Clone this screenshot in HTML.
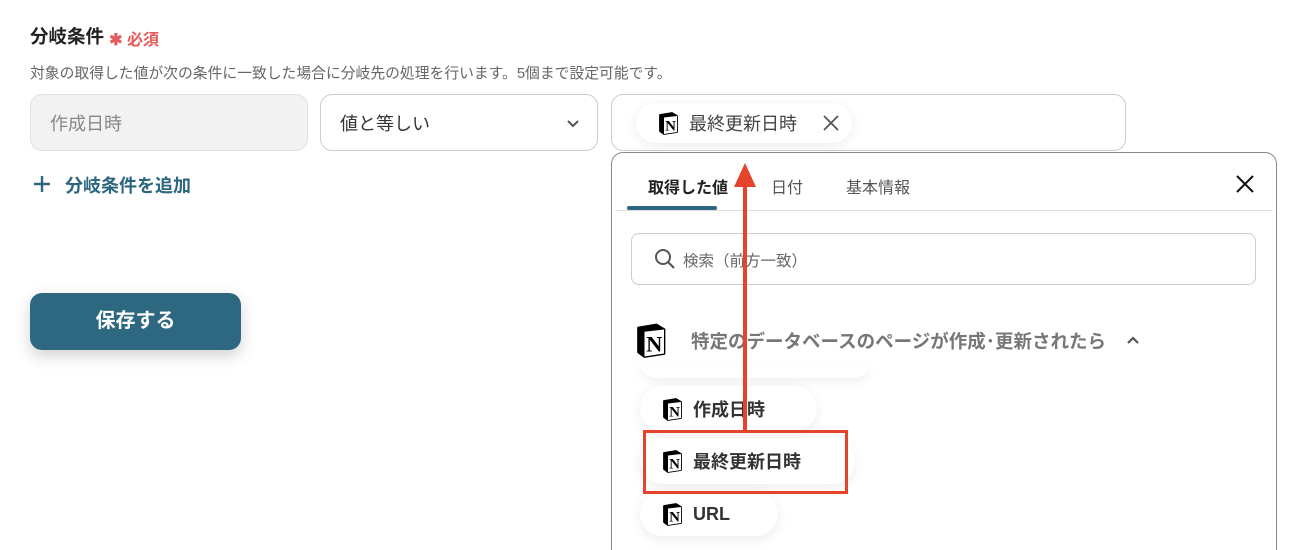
<!DOCTYPE html>
<html><head><meta charset="utf-8"><style>
*{box-sizing:border-box;margin:0;padding:0}
html,body{width:1290px;height:550px;overflow:hidden}
body{background:#fff;position:relative;font-family:"Liberation Sans","Noto Sans CJK JP",sans-serif;color:#333}
.a{position:absolute;white-space:nowrap}
.chip{position:absolute;background:#fff;border-radius:24px;box-shadow:0 3px 12px rgba(0,0,0,.08);display:flex;align-items:center;font-weight:bold;font-size:18px;color:#333}
.chip .ic{margin:0 8px 0 21px}
</style></head><body>
<svg width="0" height="0" style="position:absolute"><defs>
<g id="n"><path d="M3 4 L15 2 L20 5 L20 21 L7 23 L3 20 Z" fill="#000" stroke="#000" stroke-width="1.8" stroke-linejoin="round"/><path d="M7 6.5 L20 5 L20 21 L7 23 Z" fill="#fff"/><text x="13.5" y="19.5" font-family="Liberation Serif" font-weight="bold" font-size="15" text-anchor="middle" fill="#000">N</text></g>
</defs></svg>
<div class="a" style="left:30px;top:23px;font-size:18.5px;font-weight:bold;color:#222">分岐条件 <span style="color:#e55a5a;font-size:16px;position:relative;top:2px">✱ 必須</span></div>
<div class="a" style="left:30px;top:62px;font-size:14.8px;color:#666">対象の取得した値が次の条件に一致した場合に分岐先の処理を行います。5個まで設定可能です。</div>
<div class="a" style="left:30px;top:94px;width:278px;height:57px;background:#f2f2f2;border:1px solid #e0e0e0;border-radius:12px;font-size:18px;color:#888;padding:15px 0 0 19px">作成日時</div>
<div class="a" style="left:320px;top:94px;width:278px;height:57px;background:#fff;border:1px solid #ccc;border-radius:12px;font-size:18px;color:#333;padding:15px 0 0 19px">値と等しい
<svg style="position:absolute;left:245px;top:24px" width="14" height="9"><path d="M2 2 L7 7 L12 2" fill="none" stroke="#555" stroke-width="2"/></svg></div>
<div class="a" style="left:611px;top:94px;width:515px;height:57px;border:1px solid #ccc;border-radius:12px"></div>
<div class="chip" style="left:636px;top:103px;width:216px;height:40px;font-weight:normal;font-size:18px;color:#444"><svg class="ic" width="24" height="24"><use href="#n"/></svg>最終更新日時
<svg style="position:absolute;left:187px;top:12px" width="16" height="16"><path d="M1 1 L15 15 M15 1 L1 15" stroke="#555" stroke-width="1.8"/></svg></div>
<svg class="a" style="left:34px;top:176px" width="16" height="16"><path d="M8 0 V16 M0 8 H16" stroke="#2d6680" stroke-width="2.4"/></svg>
<div class="a" style="left:65px;top:172px;font-size:18px;font-weight:bold;color:#2d6680">分岐条件を追加</div>
<div class="a" style="left:30px;top:293px;width:211px;height:57px;background:#2d6880;border-radius:12px;box-shadow:0 6px 16px rgba(0,0,0,.18);color:#fff;font-weight:bold;font-size:20px;text-align:center;line-height:57px">保存する</div>
<div class="a" style="left:611px;top:152px;width:666px;height:420px;border:1px solid #888;border-radius:12px;background:#fff"></div>
<div class="a" style="left:648px;top:174px;font-size:16px;font-weight:bold;color:#222">取得した値</div>
<div class="a" style="left:771px;top:174px;font-size:16px;color:#555">日付</div>
<div class="a" style="left:846px;top:174px;font-size:16px;color:#555">基本情報</div>
<div class="a" style="left:627px;top:206px;width:90px;height:4px;background:#2d6880;border-radius:2px"></div>
<div class="a" style="left:615px;top:210px;width:658px;height:1px;background:#ddd"></div>
<svg class="a" style="left:1235px;top:174px" width="20" height="20"><path d="M2 2 L18 18 M18 2 L2 18" stroke="#111" stroke-width="2"/></svg>
<div class="a" style="left:631px;top:233px;width:625px;height:52px;border:1px solid #ccc;border-radius:8px"></div>
<svg class="a" style="left:654px;top:248px" width="22" height="22"><circle cx="9" cy="9" r="7" fill="none" stroke="#555" stroke-width="2"/><path d="M14 14 L20 20" stroke="#555" stroke-width="2.2"/></svg>
<div class="a" style="left:683px;top:249px;font-size:15.5px;color:#666">検索（前方一致）</div>
<div class="a" style="left:640px;top:362px;width:230px;height:16px;background:#fff;border-radius:0 0 16px 16px;box-shadow:0 4px 10px rgba(0,0,0,.06)"></div>
<svg class="a" style="left:634px;top:322px" width="36" height="36" viewBox="0 0 24 24"><use href="#n"/></svg>
<div class="a" style="left:691px;top:328px;font-size:18.5px;font-weight:bold;color:#777">特定のデータベースのページが作成･更新されたら</div>
<svg class="a" style="left:1126px;top:336px" width="14" height="9"><path d="M2 7 L7 2 L12 7" fill="none" stroke="#555" stroke-width="2.2"/></svg>
<div class="chip" style="left:640px;top:386px;width:177px;height:45px"><svg class="ic" width="24" height="24"><use href="#n"/></svg>作成日時</div>
<div class="chip" style="left:640px;top:438px;width:215px;height:46px"><svg class="ic" width="24" height="24"><use href="#n"/></svg>最終更新日時</div>
<div class="chip" style="left:640px;top:492px;width:138px;height:44px"><svg class="ic" width="24" height="24"><use href="#n"/></svg>URL</div>
<div class="a" style="left:643px;top:430px;width:205px;height:64px;border:3px solid #e5432a"></div>
<div class="a" style="left:743px;top:183px;width:4px;height:248px;background:#e5432a"></div>
<svg class="a" style="left:734px;top:163px" width="22" height="24"><path d="M11 0 L22 24 L0 24 Z" fill="#e5432a"/></svg>
</body></html>
